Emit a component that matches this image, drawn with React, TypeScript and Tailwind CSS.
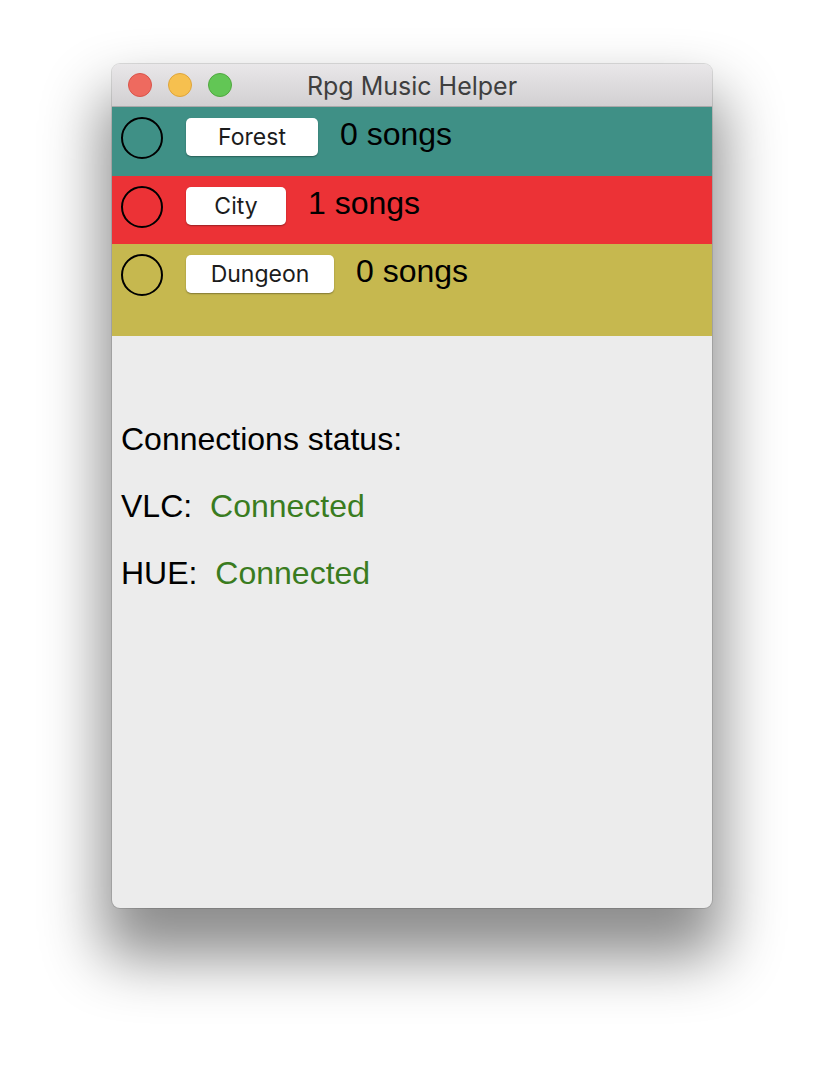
import React from "react";

type Mood = {
  name: string;
  songs: number;
  bg: string;
  rowHeight: string;
  buttonWidth: string;
};

const moods: Mood[] = [
  { name: "Forest", songs: 0, bg: "bg-[#3f9086]", rowHeight: "h-[69px]", buttonWidth: "w-[132px]" },
  { name: "City", songs: 1, bg: "bg-[#ec3236]", rowHeight: "h-[68px]", buttonWidth: "w-[100px]" },
  { name: "Dungeon", songs: 0, bg: "bg-[#c6b84f]", rowHeight: "h-[92px]", buttonWidth: "w-[148px]" },
];

function TrafficLights() {
  return (
    <div className="flex items-center gap-[16px]">
      <span className="block w-[24px] h-[24px] rounded-full bg-[#ee6a5f] border border-[#d9544a]" />
      <span className="block w-[24px] h-[24px] rounded-full bg-[#f6c04f] border border-[#dfa53a]" />
      <span className="block w-[24px] h-[24px] rounded-full bg-[#62c655] border border-[#50a83f]" />
    </div>
  );
}

function MoodRow({ mood }: { mood: Mood }) {
  return (
    <div className={`${mood.bg} ${mood.rowHeight} flex items-start pl-[9px]`}>
      <div className="mt-[10px] w-[42px] h-[42px] rounded-full border-2 border-black" />
      <button
        className={`${mood.buttonWidth} mt-[11px] ml-[23px] h-[38px] rounded-[5px] bg-white text-[23px] text-[#1c1c1c] shadow-[0_1px_1.5px_rgba(0,0,0,0.35)] font-['Inter',sans-serif] leading-none`}
      >
        {mood.name}
      </button>
      <span className="mt-[9px] ml-[22px] text-[32px] text-black font-['Liberation_Sans',Arial,sans-serif] leading-[37px]">
        {mood.songs} songs
      </span>
    </div>
  );
}

export default function App() {
  return (
    <div className="min-h-[1068px] bg-white pt-[64px] pl-[112px]">
      <div className="w-[600px] h-[844px] rounded-[8px] overflow-hidden flex flex-col bg-[#ececec] shadow-[0_0_0_1px_rgba(0,0,0,0.12),0_40px_60px_10px_rgba(0,0,0,0.45)]">
        <div className="relative h-[43px] shrink-0 flex items-center pl-[16px] bg-gradient-to-b from-[#e9e7e9] to-[#d2d0d2] border-b border-[#a9a8a9]">
          <TrafficLights />
          <div className="absolute inset-0 flex items-center justify-center pt-[4px] text-[25px] text-[#3f3f3f] font-['Inter',sans-serif] pointer-events-none">
            Rpg Music Helper
          </div>
        </div>
        {moods.map((mood) => (
          <MoodRow key={mood.name} mood={mood} />
        ))}
        <div className="flex flex-col gap-[30px] pt-[85px] pl-[9px] text-[32px] leading-[37px] text-black font-['Liberation_Sans',Arial,sans-serif]">
          <p>Connections status:</p>
          <p>
            VLC: <span className="ml-[9px] text-[#3a7c1f]">Connected</span>
          </p>
          <p>
            HUE: <span className="ml-[9px] text-[#3a7c1f]">Connected</span>
          </p>
        </div>
      </div>
    </div>
  );
}
